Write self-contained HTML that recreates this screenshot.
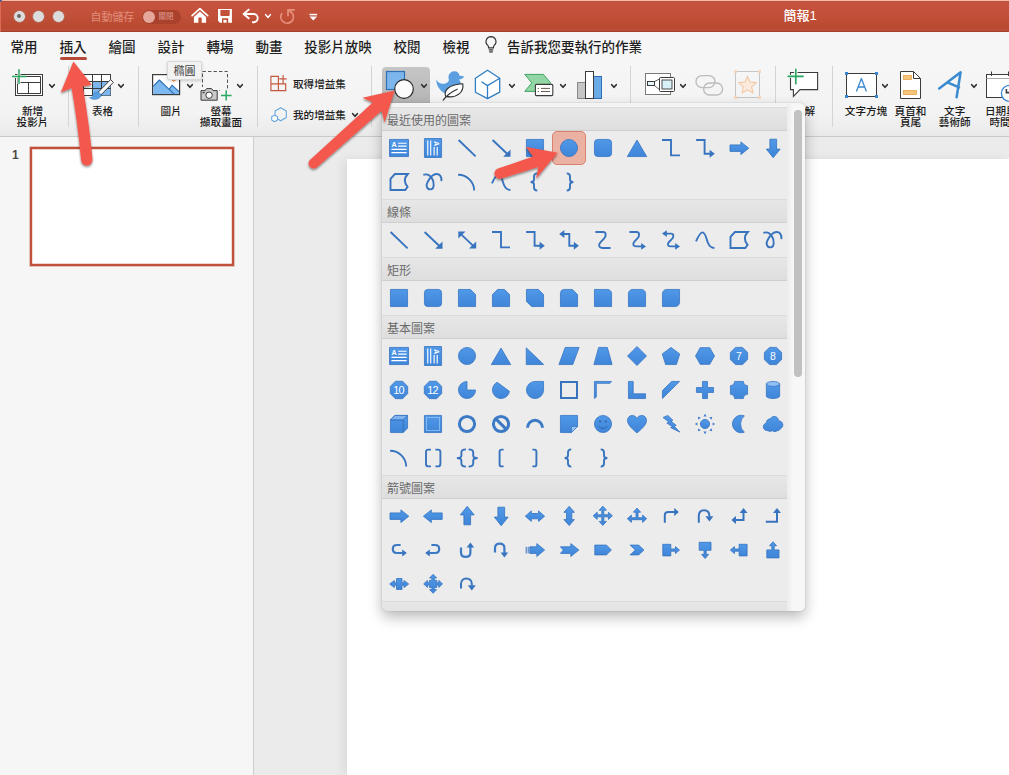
<!DOCTYPE html><html lang="zh-Hant"><head><meta charset="utf-8"><title>簡報1</title><style>
*{box-sizing:border-box;margin:0;padding:0}
html,body{width:1009px;height:775px;overflow:hidden;background:#fff}
body{font-family:"Liberation Sans","Noto Sans CJK TC",sans-serif;position:relative;color:#222;-webkit-font-smoothing:antialiased}
.abs{position:absolute}
#titlebar{left:0;top:0;width:1009px;height:32px;background:linear-gradient(#a8523f 0,#c5533e 4%,#c35139 40%,#b94931 86%,#bd4e37 91%,#bd4e37 95%,#963d2a 100%);border-top:1px solid #fdb9a8;border-left:1px solid #d96a55}
.tl{position:absolute;top:9.7px;width:13px;height:13px;border-radius:50%;background:#dcdcdc;border:1px solid #b9604e}
#tabs{left:0;top:32px;width:1009px;height:30px;background:#f6f6f6}
.tab{position:absolute;top:39.2px;font-size:13.5px;line-height:18px;color:#1e1e1e;white-space:nowrap;transform:translateX(-50%);font-weight:500}
#ribbon{left:0;top:62px;width:1009px;height:75px;background:linear-gradient(#f6f6f6,#f3f3f3 70%,#e9e9e9);border-bottom:1px solid #c9c9c9}
.sep{position:absolute;width:1px;background:#d4d4d4}
.lbl{position:absolute;font-size:10.6px;line-height:11.5px;color:#1a1a1a;text-align:center;white-space:nowrap;transform:translateX(-50%);font-weight:500}
.chev{position:absolute;width:9px;height:6px}
#panel{left:0;top:137px;width:254px;height:638px;background:#f6f6f6;border-right:1px solid #cfcfcf}
#work{left:254px;top:137px;width:755px;height:638px;background:#ebebeb}
#slide{left:347px;top:159px;width:662px;height:616px;background:#fff;box-shadow:-4px 0 10px rgba(0,0,0,.07)}
#thumb{left:30px;top:147px;width:204px;height:119px;background:#fff;border:2px solid #c0523b;box-shadow:0 0 0 0.6px rgba(192,82,59,.55),inset 0 0 0 0.4px rgba(192,82,59,.5)}
#dd{left:382px;top:103px;width:423px;height:508px;background:#ececec;border-radius:0 5px 5px 5px;box-shadow:0 6px 14px rgba(0,0,0,.28),0 0 1px rgba(0,0,0,.45);overflow:hidden}
.hd{position:absolute;left:0;width:409px;height:24px;background:linear-gradient(#e7e7e7,#dedede);border-top:1px solid #dcdcdc;border-bottom:1px solid #cfcfcf;font-size:12px;line-height:26px;color:#6a6a6a;padding-left:5px;white-space:nowrap}
#sbar{left:405px;top:0;width:18px;height:507px;background:linear-gradient(to right,#ececec,#f7f7f7 6px)}
#sthumb{left:412px;top:6px;width:8px;height:267px;border-radius:4px;background:#c1c1c1}
.ic{position:absolute;width:24px;height:24px;overflow:visible}
#sel{left:170px;top:27px;width:34px;height:34px;border-radius:5px;background:#ebb1a3;border:1px solid #d9806f}
</style></head><body>
<div id="titlebar" class="abs"></div>
<div class="tl" style="left:12.5px"></div>
<div class="tl" style="left:32.3px"></div>
<div class="tl" style="left:52.3px"></div>
<div class="abs" style="left:17.2px;top:14.2px;width:4px;height:4px;border-radius:50%;background:#6a6a6a"></div>
<div class="abs" style="left:90.5px;top:9.5px;font-size:11px;line-height:14px;color:#e08e7c;white-space:nowrap;letter-spacing:-0.1px">自動儲存</div>
<div class="abs" style="left:142px;top:10px;width:39px;height:13.5px;border-radius:7px;background:#a9412d"></div>
<div class="abs" style="left:142.5px;top:10.5px;width:12.5px;height:12.5px;border-radius:50%;background:#e5a799"></div>
<div class="abs" style="left:158.5px;top:11.6px;font-size:7.5px;line-height:10px;color:#e0a092;white-space:nowrap">關閉</div>
<svg class="abs" style="left:186px;top:2px;overflow:visible" width="120" height="28" viewBox="186 2 120 28" ><path d="M192.1,15.6 L199.9,8.6 L207.7,15.6" fill="none" stroke="#fff" stroke-width="1.7" stroke-linecap="round" stroke-linejoin="round"/><path d="M193.9,16.9 L199.9,11.5 L206.1,16.9 V22.7 H201.7 V17.5 H198.4 V22.7 H193.9 Z" fill="#fff"/><path d="M218,8.9 H231.9 V22.7 H219.9 L218,20.8 Z M220.4,10 V15 Q220.4,15.9 221.3,15.9 H228.8 Q229.7,15.9 229.7,15 V10 Z M222,18.3 V22.7 H228.2 V18.3 Z" fill="#fff" fill-rule="evenodd"/><rect x="223.4" y="19.9" width="3.2" height="2.8" fill="#fff"/><path d="M248.7,9.6 L243.6,14 L248.7,18.2 M244,14 H253.6 A4.1,4.1 0 0 1 253.6,22.2 H252.8" fill="none" stroke="#fff" stroke-width="1.9" stroke-linecap="round" stroke-linejoin="round"/><path d="M281.7,13.7 A6.3,6.3 0 1 0 292.6,13.8 Q291,11.4 288.6,10.6" fill="none" stroke="#e8907e" stroke-width="1.7" stroke-linecap="round"/><path d="M294.8,9.9 H288 V16.2" fill="none" stroke="#e8907e" stroke-width="1.7" stroke-linecap="butt" stroke-linejoin="miter"/></svg>
<svg class="abs" style="left:263px;top:11.3px;overflow:visible" width="10" height="10" viewBox="-5 -5 10 10"><path d="M-2.53,-1.4300000000000002 L0,1.4300000000000002 L2.53,-1.4300000000000002" fill="none" stroke="#fff" stroke-width="1.4" stroke-linecap="round" stroke-linejoin="round"/></svg>
<svg class="abs" style="left:309px;top:13px;overflow:visible" width="9" height="8" viewBox="0 0 9 8" ><rect x="0.5" y="0.8" width="7.6" height="1.5" fill="#fff"/><path d="M0.5,3.6 H8.1 L4.3,7.4 Z" fill="#fff"/></svg>
<div class="abs" style="left:800px;top:7px;transform:translateX(-50%);font-size:13px;line-height:18px;color:#fff;white-space:nowrap;font-weight:500">簡報1</div>
<svg class="abs" style="left:0;top:0" width="5" height="5" viewBox="0 0 5 5"><path d="M0,0 H3.6 A3.6,3.6 0 0 0 0,3.6 Z" fill="#2c4f9e"/></svg>
<div id="tabs" class="abs"></div>
<div class="tab" style="left:24px">常用</div>
<div class="tab" style="left:73px">插入</div>
<div class="tab" style="left:122px">繪圖</div>
<div class="tab" style="left:171px">設計</div>
<div class="tab" style="left:220px">轉場</div>
<div class="tab" style="left:269px">動畫</div>
<div class="tab" style="left:338px">投影片放映</div>
<div class="tab" style="left:407px">校閱</div>
<div class="tab" style="left:456px">檢視</div>
<div class="abs" style="left:60px;top:57px;width:27px;height:3px;border-radius:1.5px;background:#b64a38"></div>
<svg class="abs" style="left:484px;top:35px;overflow:visible" width="14" height="20" viewBox="0 0 14 20" ><path d="M7,1.6 A5,5 0 0 1 10.2,10.4 C9.6,11 9.4,11.8 9.4,12.8 H4.6 C4.6,11.8 4.4,11 3.8,10.4 A5,5 0 0 1 7,1.6 Z" fill="none" stroke="#333" stroke-width="1.2"/><path d="M4.8,14.8 H9.2 M5.2,16.8 H8.8" stroke="#333" stroke-width="1.2" fill="none"/></svg>
<div class="abs" style="left:507px;top:39.2px;font-size:13.5px;line-height:18px;color:#1e1e1e;white-space:nowrap;font-weight:500">告訴我您要執行的作業</div>
<div id="ribbon" class="abs"></div>
<div class="sep" style="left:68px;top:66px;height:61px"></div>
<div class="sep" style="left:138px;top:66px;height:61px"></div>
<div class="sep" style="left:257px;top:66px;height:61px"></div>
<div class="sep" style="left:371px;top:66px;height:61px"></div>
<div class="sep" style="left:630px;top:66px;height:38px"></div>
<div class="sep" style="left:775px;top:66px;height:38px"></div>
<div class="sep" style="left:832px;top:66px;height:61px"></div>
<svg class="abs" style="left:12px;top:69px;overflow:visible" width="32" height="28" viewBox="0 0 32 28" ><rect x="3.5" y="5.5" width="27" height="21" fill="#fff" stroke="#3b3b3b" stroke-width="1"/><path d="M5.5,7.5 H28.5 V24.5 H5.5 Z M5.5,13.5 H28.5 M16.5,13.5 V24.5" fill="#fff" stroke="#3b3b3b" stroke-width="1"/><rect x="0" y="0" width="13" height="15" fill="#f5f5f5" opacity="0.0"/><path d="M7,0.5 V15 M0.5,7.5 H14" stroke="#f4f4f4" stroke-width="3.2" fill="none"/><path d="M7,0.8 V14.6 M0.6,7.5 H13.6" stroke="#2aa862" stroke-width="1.5" fill="none" stroke-linecap="round"/></svg>
<svg class="abs" style="left:47px;top:80.5px;overflow:visible" width="10" height="10" viewBox="-5 -5 10 10"><path d="M-2.3,-1.3 L0,1.3 L2.3,-1.3" fill="none" stroke="#2b2b2b" stroke-width="1.6" stroke-linecap="round" stroke-linejoin="round"/></svg>
<div class="lbl" style="left:32.5px;top:105.5px">新增<br>投影片</div>
<svg class="abs" style="left:83px;top:74px;overflow:visible" width="30" height="24" viewBox="0 0 30 24" ><rect x="0.5" y="0.5" width="27" height="21" fill="#fff" stroke="#3b3b3b"/><rect x="9.5" y="7.5" width="18" height="14" fill="#7db6ec"/><path d="M0.5,7.5 H27.5 M0.5,14.5 H27.5 M9.5,0.5 V21.5 M18.5,0.5 V21.5" stroke="#3b3b3b" fill="none"/><path d="M27.6,5.6 L30.4,8.4 L17.2,21.6 L14.4,19 Z" fill="#fff" stroke="#3b3b3b" stroke-width="1" stroke-linejoin="round"/><path d="M15,18.2 C12.2,17.4 10.4,19.2 10,21.2 C9.6,22.8 8.4,23.8 6.4,23.6 C9.2,26.2 15,25.8 17.4,23 C18.8,21.4 17.8,19 15,18.2 Z" fill="#5a9fe0" stroke="#3a7fcc" stroke-width="0.6"/></svg>
<svg class="abs" style="left:116px;top:80.5px;overflow:visible" width="10" height="10" viewBox="-5 -5 10 10"><path d="M-2.3,-1.3 L0,1.3 L2.3,-1.3" fill="none" stroke="#2b2b2b" stroke-width="1.6" stroke-linecap="round" stroke-linejoin="round"/></svg>
<div class="lbl" style="left:102.5px;top:105.5px">表格</div>
<svg class="abs" style="left:152px;top:74px;overflow:visible" width="29" height="21" viewBox="0 0 29 21" ><rect x="0.6" y="0.6" width="27" height="20" fill="#fff" stroke="#3b3b3b" stroke-width="1.2"/><path d="M1.2,20 V12.4 L7.3,6 L17,15.8 L20,11.2 L27,17.6 V20 Z" fill="#7db8ee"/><path d="M1.2,12.4 L7.3,6 L22.4,20.4 M17,15.6 L20,11.2 L27,17.6" fill="none" stroke="#2a6db8" stroke-width="1.1" stroke-linejoin="round"/><circle cx="21.8" cy="5.6" r="2.1" fill="#f0a05a"/></svg>
<svg class="abs" style="left:185px;top:80.5px;overflow:visible" width="10" height="10" viewBox="-5 -5 10 10"><path d="M-2.3,-1.3 L0,1.3 L2.3,-1.3" fill="none" stroke="#2b2b2b" stroke-width="1.6" stroke-linecap="round" stroke-linejoin="round"/></svg>
<div class="lbl" style="left:171px;top:105.5px">圖片</div>
<svg class="abs" style="left:200px;top:70px;overflow:visible" width="34" height="32" viewBox="0 0 34 32" ><rect x="2.5" y="1.5" width="25" height="19" fill="none" stroke="#555" stroke-width="1" stroke-dasharray="3.4,2.1"/><rect x="-0.5" y="17" width="19.5" height="15" fill="#f5f5f5"/><path d="M1,20.6 H5.2 L6.6,18.6 H11.6 L13,20.6 H17.2 V30.2 H1 Z" fill="#c9c9c9" stroke="#3b3b3b" stroke-width="1" stroke-linejoin="round"/><circle cx="9.1" cy="25.2" r="3.2" fill="#fff" stroke="#3b3b3b" stroke-width="1"/><rect x="2.6" y="22" width="2" height="1.2" fill="#3b3b3b"/><rect x="19.5" y="19.5" width="14" height="13" fill="#f5f5f5"/><path d="M26.2,20.2 V30.6 M21,25.4 H31.6" stroke="#2aa862" stroke-width="1.5" fill="none"/></svg>
<svg class="abs" style="left:235px;top:80.5px;overflow:visible" width="10" height="10" viewBox="-5 -5 10 10"><path d="M-2.3,-1.3 L0,1.3 L2.3,-1.3" fill="none" stroke="#2b2b2b" stroke-width="1.6" stroke-linecap="round" stroke-linejoin="round"/></svg>
<div class="lbl" style="left:221px;top:105.5px">螢幕<br>擷取畫面</div>
<svg class="abs" style="left:268px;top:72px;overflow:visible" width="22" height="22" viewBox="268 72 22 22" ><path d="M270.9,76.4 H278.4 V90.6 H270.9 Z M270.9,83.9 H285.7 V90.6 H278.4" fill="none" stroke="#c4573e" stroke-width="1.15"/><path d="M283.1,74.9 V83.9 M279.3,78.8 H286.7" stroke="#c4573e" stroke-width="1.15" fill="none"/></svg>
<div class="abs" style="left:293px;top:76.8px;font-size:10.6px;line-height:14px;color:#1e1e1e;white-space:nowrap;font-weight:500">取得增益集</div>
<svg class="abs" style="left:268px;top:104px;overflow:visible" width="22" height="22" viewBox="268 104 22 22" ><path d="M280.7,107.7 L286.3,110.95 V117.45 L280.7,120.7 L275.1,117.45 V110.95 Z" fill="none" stroke="#62a5de" stroke-width="1.05" stroke-linejoin="round"/><path d="M274.6,115.1 L277.5,116.75 V120.05 L274.6,121.7 L271.7,120.05 V116.75 Z" fill="#fff" stroke="#62a5de" stroke-width="1.05" stroke-linejoin="round"/></svg>
<div class="abs" style="left:293px;top:108px;font-size:10.6px;line-height:14px;color:#1e1e1e;white-space:nowrap;font-weight:500">我的增益集</div>
<svg class="abs" style="left:350px;top:110.2px;overflow:visible" width="10" height="10" viewBox="-5 -5 10 10"><path d="M-2.3,-1.3 L0,1.3 L2.3,-1.3" fill="none" stroke="#2b2b2b" stroke-width="1.6" stroke-linecap="round" stroke-linejoin="round"/></svg>
<div class="abs" style="left:382px;top:67px;width:48px;height:36px;border-radius:4px 4px 0 0;background:linear-gradient(#c6c6c6,#b5b5b5)"></div>
<svg class="abs" style="left:385px;top:70px;overflow:visible" width="30" height="30" viewBox="0 0 30 30" ><rect x="1.5" y="1.5" width="18" height="18" fill="#7db6ec" stroke="#2f6fb5" stroke-width="1.2"/><circle cx="19" cy="19" r="9.3" fill="#fbfbfb" stroke="#2b2b2b" stroke-width="1.2"/></svg>
<svg class="abs" style="left:419px;top:80.5px;overflow:visible" width="10" height="10" viewBox="-5 -5 10 10"><path d="M-2.3,-1.3 L0,1.3 L2.3,-1.3" fill="none" stroke="#2b2b2b" stroke-width="1.6" stroke-linecap="round" stroke-linejoin="round"/></svg>
<svg class="abs" style="left:434px;top:68px;overflow:visible" width="34" height="34" viewBox="434 68 34 34" ><path d="M436.2,79.2 C437.4,82.8 441.6,84.8 446,83.2 C447.4,82.6 448.6,81.4 449,80 C447.4,76 449.6,71.6 454,71.2 C457,71 459.2,73 459.4,75.4 L464.2,76.6 C463.2,78.6 461,79.6 458.8,79.4 C461.4,82 462.4,86 461,89.4 C459,93.6 453,95 447.6,94 C441.4,92.8 436.4,87 436.2,79.2 Z" fill="#5b9fe0"/><path d="M445.8,96.4 C443.4,91.2 447.6,84.6 462.8,83.8 C464,91.6 457.4,98.8 445.8,96.4 Z" fill="#fff" stroke="#333" stroke-width="1.15" stroke-linejoin="round"/><path d="M443.2,100.2 C446.6,95.4 451,92 457.2,89.2" fill="none" stroke="#333" stroke-width="1.15" stroke-linecap="round"/></svg>
<svg class="abs" style="left:472px;top:68px;overflow:visible" width="32" height="34" viewBox="472 68 32 34" ><path d="M487.5,70.2 L499.7,78.2 V92.2 L487.5,98.6 L475.4,92.2 V78.2 Z" fill="#fff" stroke="#2f7fc4" stroke-width="1.3" stroke-linejoin="round"/><path d="M499.7,78.2 L487.5,85.6 V98.6 M487.5,85.6 L481.4,81.8" fill="none" stroke="#2f7fc4" stroke-width="1.3" stroke-linejoin="round"/></svg>
<svg class="abs" style="left:506.5px;top:80.5px;overflow:visible" width="10" height="10" viewBox="-5 -5 10 10"><path d="M-2.3,-1.3 L0,1.3 L2.3,-1.3" fill="none" stroke="#2b2b2b" stroke-width="1.6" stroke-linecap="round" stroke-linejoin="round"/></svg>
<svg class="abs" style="left:522px;top:72px;overflow:visible" width="34" height="26" viewBox="522 72 34 26" ><path d="M524.8,74.4 H543.4 L550.6,82.8 L543.4,91.4 H524.8 L531.8,82.8 Z" fill="#93d6a6" stroke="#3fa463" stroke-width="1" stroke-linejoin="round"/><rect x="535.4" y="84.4" width="17.4" height="11.2" rx="1" fill="#fff" stroke="#3b3b3b" stroke-width="1.1"/><path d="M537.8,88.4 H539 M541,88.4 H550 M537.8,91.5 H539 M541,91.5 H550" stroke="#6a5a50" stroke-width="1" fill="none"/></svg>
<svg class="abs" style="left:558px;top:80.5px;overflow:visible" width="10" height="10" viewBox="-5 -5 10 10"><path d="M-2.3,-1.3 L0,1.3 L2.3,-1.3" fill="none" stroke="#2b2b2b" stroke-width="1.6" stroke-linecap="round" stroke-linejoin="round"/></svg>
<svg class="abs" style="left:576px;top:70px;overflow:visible" width="28" height="30" viewBox="0 0 28 30" ><rect x="1.5" y="12.5" width="8" height="16" fill="#c6c6c6" stroke="#8a8a8a" stroke-width="1"/><rect x="17.5" y="6.5" width="8" height="22" fill="#6aaae6" stroke="#2f6fb5" stroke-width="1"/><rect x="9.5" y="1.5" width="8" height="27" fill="#fff" stroke="#3b3b3b" stroke-width="1"/></svg>
<svg class="abs" style="left:609px;top:80.5px;overflow:visible" width="10" height="10" viewBox="-5 -5 10 10"><path d="M-2.3,-1.3 L0,1.3 L2.3,-1.3" fill="none" stroke="#2b2b2b" stroke-width="1.6" stroke-linecap="round" stroke-linejoin="round"/></svg>
<svg class="abs" style="left:645px;top:73px;overflow:visible" width="31" height="23" viewBox="0 0 31 23" ><rect x="0.5" y="0.5" width="25" height="21" fill="#fff" stroke="#7a7a7a" stroke-width="1"/><rect x="2.5" y="8.5" width="7" height="4" fill="#e6f6fb" stroke="#3b3b3b" stroke-width="1"/><path d="M9.5,8.5 L15.5,5.5 M9.5,12.5 L15.5,17.5" stroke="#3b3b3b" stroke-width="0.8" fill="none"/><rect x="14.5" y="4.5" width="15" height="14" rx="1" fill="#fff" stroke="#3b3b3b" stroke-width="1"/><rect x="17" y="7" width="10" height="9" fill="#d8f1f8" stroke="#3b3b3b" stroke-width="0.9"/></svg>
<svg class="abs" style="left:678px;top:80.5px;overflow:visible" width="10" height="10" viewBox="-5 -5 10 10"><path d="M-2.3,-1.3 L0,1.3 L2.3,-1.3" fill="none" stroke="#2b2b2b" stroke-width="1.6" stroke-linecap="round" stroke-linejoin="round"/></svg>
<svg class="abs" style="left:695px;top:74px;overflow:visible" width="30" height="23" viewBox="0 0 30 23" ><rect x="1" y="1.6" width="19" height="12" rx="6" fill="none" stroke="#bdbdbd" stroke-width="1.4"/><rect x="8.6" y="9" width="19" height="12" rx="6" fill="none" stroke="#bdbdbd" stroke-width="1.4"/></svg>
<svg class="abs" style="left:734px;top:70px;overflow:visible" width="28" height="30" viewBox="0 0 28 30" ><rect x="1.5" y="1.5" width="24" height="26" fill="none" stroke="#c6c6c6" stroke-width="1"/><rect x="0" y="0" width="3" height="3" fill="#f6d8c0"/><rect x="0" y="26" width="3" height="3" fill="#f6d8c0"/><rect x="24" y="0" width="3" height="3" fill="#f6d8c0"/><rect x="24" y="26" width="3" height="3" fill="#f6d8c0"/><path d="M13.5,6.2 L16,12 L22.4,12.6 L17.6,16.8 L19,23 L13.5,19.8 L8,23 L9.4,16.8 L4.6,12.6 L11,12 Z" fill="#fcebdc" stroke="#f3c9a6" stroke-width="1.1" stroke-linejoin="round"/></svg>
<svg class="abs" style="left:786px;top:66px;overflow:visible" width="36" height="34" viewBox="786 66 36 34" ><path d="M790.5,72.5 H817.6 V89.6 H800 L793.4,96.4 V89.6 H790.5 Z" fill="#fff" stroke="#3b3b3b" stroke-width="1.1" stroke-linejoin="miter"/><path d="M795.8,68.6 V84.4 M787.6,76.4 H803.6" stroke="#f5f5f5" stroke-width="3.4" fill="none"/><path d="M795.8,69.2 V83.8 M788.2,76.4 H803" stroke="#2aa862" stroke-width="1.6" fill="none" stroke-linecap="round"/></svg>
<div class="lbl" style="left:804.5px;top:105.5px">註解</div>
<svg class="abs" style="left:845px;top:72px;overflow:visible" width="33" height="26" viewBox="0 0 33 26" ><rect x="1.5" y="1.5" width="30" height="23" fill="#fff" stroke="#3b3b3b" stroke-width="1"/><rect x="0" y="0" width="3" height="3" fill="#3a86d2"/><rect x="30" y="0" width="3" height="3" fill="#3a86d2"/><rect x="0" y="23" width="3" height="3" fill="#3a86d2"/><rect x="30" y="23" width="3" height="3" fill="#3a86d2"/><path d="M11.4,19.4 L16.4,6.6 L21.4,19.4 M13.2,15 H19.6" fill="none" stroke="#3a86d2" stroke-width="1.3" stroke-linejoin="round"/></svg>
<svg class="abs" style="left:879.6px;top:80.5px;overflow:visible" width="10" height="10" viewBox="-5 -5 10 10"><path d="M-2.3,-1.3 L0,1.3 L2.3,-1.3" fill="none" stroke="#2b2b2b" stroke-width="1.6" stroke-linecap="round" stroke-linejoin="round"/></svg>
<div class="lbl" style="left:866px;top:105.5px">文字方塊</div>
<svg class="abs" style="left:899px;top:70px;overflow:visible" width="23" height="30" viewBox="0 0 23 30" ><path d="M1.5,1.5 H14.5 L21.5,8.5 V28.5 H1.5 Z" fill="#fff" stroke="#3b3b3b" stroke-width="1" stroke-linejoin="round"/><path d="M14.5,1.5 V8.5 H21.5" fill="none" stroke="#3b3b3b" stroke-width="1"/><rect x="4.5" y="5.5" width="8" height="4" fill="#f7c47c" stroke="#e5a64f" stroke-width="0.8"/><rect x="4.5" y="20.5" width="13" height="4" fill="#f7c47c" stroke="#e5a64f" stroke-width="0.8"/></svg>
<div class="lbl" style="left:910.5px;top:105.5px">頁首和<br>頁尾</div>
<svg class="abs" style="left:937px;top:70px;overflow:visible" width="28" height="30" viewBox="0 0 28 30" ><path d="M2.2,18.4 L23.6,2.2 L19.6,27.2 M11,12.6 L22,17.4" fill="none" stroke="#3a8ad0" stroke-width="2.5" stroke-linecap="round" stroke-linejoin="round"/></svg>
<svg class="abs" style="left:968.6px;top:80.5px;overflow:visible" width="10" height="10" viewBox="-5 -5 10 10"><path d="M-2.3,-1.3 L0,1.3 L2.3,-1.3" fill="none" stroke="#2b2b2b" stroke-width="1.6" stroke-linecap="round" stroke-linejoin="round"/></svg>
<div class="lbl" style="left:954.7px;top:105.5px">文字<br>藝術師</div>
<svg class="abs" style="left:985px;top:70px;overflow:visible" width="28" height="30" viewBox="0 0 28 30" ><rect x="1.5" y="4.5" width="30" height="23" fill="#fff" stroke="#3b3b3b" stroke-width="1"/><path d="M1.5,8.5 H31" stroke="#a8a8a8" stroke-width="1" fill="none"/><path d="M6.5,1.5 V6 M23.5,1.5 V6" stroke="#3b3b3b" stroke-width="1" fill="none"/><circle cx="24.4" cy="23.4" r="8" fill="#fff" stroke="#3a86d2" stroke-width="1.3"/><path d="M21.4,19 V22.6 H24.4" fill="none" stroke="#3b3b3b" stroke-width="1.6"/></svg>
<div class="abs" style="left:985px;top:105.5px;font-size:10.6px;line-height:11.5px;color:#1e1e1e;white-space:nowrap;font-weight:500">日期與</div>
<div class="abs" style="left:989.5px;top:117px;font-size:10.6px;line-height:11.5px;color:#1e1e1e;white-space:nowrap;font-weight:500">時間</div>
<div class="abs" style="left:167px;top:60.5px;width:35px;height:19px;background:#f2f2f2;border:1px solid #d9d9d9;border-radius:2px;box-shadow:0 1px 3px rgba(0,0,0,.18);font-size:11px;line-height:19px;text-align:center;color:#454545">橢圓</div>
<div id="panel" class="abs"></div><div id="work" class="abs"></div><div id="slide" class="abs"></div>
<div class="abs" style="left:12px;top:149px;font-size:12px;font-weight:bold;color:#4a4a4a;line-height:13px">1</div>
<div id="thumb" class="abs"></div>
<svg width="0" height="0" style="position:absolute"><defs><linearGradient id="bg" x1="0" y1="0" x2="0" y2="1"><stop offset="0" stop-color="#5098e8"/><stop offset="1" stop-color="#3f85d8"/></linearGradient></defs></svg>
<div id="dd" class="abs">
<div class="abs" style="left:0;top:0;width:423px;height:5px;background:#f4f4f4"></div><div class="abs" style="left:0;top:1px;width:423px;height:507px">
<div class="hd" style="top:3px">最近使用的圖案</div>
<div class="hd" style="top:95px">線條</div>
<div class="hd" style="top:153px">矩形</div>
<div class="hd" style="top:211px">基本圖案</div>
<div class="hd" style="top:371px">箭號圖案</div>
<div class="hd" style="top:497px"></div>
<div id="sel" class="abs"></div>
<svg class="ic" style="left:5px;top:32px" viewBox="0 0 24 24"><g transform="translate(12 12) scale(.95) translate(-12 -12)"><rect x="2" y="3" width="20" height="18" fill="url(#bg)" stroke="#3472bf" stroke-width="0.8" stroke-linejoin="round"/><text x="4" y="11.2" font-size="7.5" font-family="Liberation Sans,sans-serif" font-weight="bold" fill="#fff">A</text><path d="M11,7 H20 M11,10 H20 M4,13.5 H20 M4,16.8 H20" stroke="#fff" stroke-width="1.2" fill="none"/></g></svg>
<svg class="ic" style="left:39px;top:32px" viewBox="0 0 24 24"><g transform="translate(12 12) scale(.95) translate(-12 -12)"><rect x="3" y="2" width="18" height="20" fill="url(#bg)" stroke="#3472bf" stroke-width="0.8" stroke-linejoin="round"/><text x="0" y="0" font-size="7.5" font-family="Liberation Sans,sans-serif" font-weight="bold" fill="#fff" transform="translate(13,4.5) rotate(90)">A</text><path d="M6.5,4 V20 M9.6,4 V20 M13.2,11 V20 M16.4,11 V20" stroke="#fff" stroke-width="1.2" fill="none"/></g></svg>
<svg class="ic" style="left:73px;top:32px" viewBox="0 0 24 24"><path d="M3.6,4 L20.6,20.4" fill="none" stroke="#3874be" stroke-width="1.9"/></svg>
<svg class="ic" style="left:107px;top:32px" viewBox="0 0 24 24"><path d="M3.6,4 L18.4,18" fill="none" stroke="#3874be" stroke-width="1.9"/><path d="M21.5,20.8 V13.6 L14.2,20.8 Z" fill="#3874be" stroke="none"/></svg>
<svg class="ic" style="left:141px;top:32px" viewBox="0 0 24 24"><g transform="translate(12 12) scale(.95) translate(-12 -12)"><rect x="3" y="3" width="18" height="18" fill="url(#bg)" stroke="#3472bf" stroke-width="0.8" stroke-linejoin="round"/></g></svg>
<svg class="ic" style="left:175px;top:32px" viewBox="0 0 24 24"><g transform="translate(12 12) scale(.95) translate(-12 -12)"><circle cx="12" cy="12" r="9" fill="url(#bg)" stroke="#3472bf" stroke-width="0.8" stroke-linejoin="round"/></g></svg>
<svg class="ic" style="left:209px;top:32px" viewBox="0 0 24 24"><g transform="translate(12 12) scale(.95) translate(-12 -12)"><rect x="3" y="3" width="18" height="18" rx="3.5" fill="url(#bg)" stroke="#3472bf" stroke-width="0.8" stroke-linejoin="round"/></g></svg>
<svg class="ic" style="left:243px;top:32px" viewBox="0 0 24 24"><g transform="translate(12 12) scale(.95) translate(-12 -12)"><path d="M12,3.6 L22.2,21 H1.8 Z" fill="url(#bg)" stroke="#3472bf" stroke-width="0.8" stroke-linejoin="round"/></g></svg>
<svg class="ic" style="left:277px;top:32px" viewBox="0 0 24 24"><path d="M3,4 H12 V19.4 H21" fill="none" stroke="#3874be" stroke-width="1.9"/></svg>
<svg class="ic" style="left:311px;top:32px" viewBox="0 0 24 24"><path d="M3.1,4 H11.6 V17.8 H17.4" fill="none" stroke="#3874be" stroke-width="1.9"/><path d="M21.8,17.8 L16.6,13.8 V21.8 Z" fill="#3874be" stroke="none"/></svg>
<svg class="ic" style="left:345px;top:32px" viewBox="0 0 24 24"><path d="M3,8.9 H13.9 V5.9 L21.8,12.2 L13.9,18.6 V15.4 H3 Z" fill="url(#bg)" stroke="#3472bf" stroke-width="0.8" stroke-linejoin="round"/></svg>
<svg class="ic" style="left:379px;top:32px" viewBox="0 0 24 24"><path d="M8.9,3.2 V13.1 H5.3 L12.2,21.7 L19.2,13.1 H15.6 V3.2 Z" fill="url(#bg)" stroke="#3472bf" stroke-width="0.8" stroke-linejoin="round"/></svg>
<svg class="ic" style="left:5px;top:66px" viewBox="0 0 24 24"><path d="M3.5,20 V8.9 L7.9,4 H20.8 C17.6,7.4 16.4,12 20.6,16.8 L18.3,20 Z" fill="none" stroke="#3874be" stroke-width="1.9"/></svg>
<svg class="ic" style="left:39px;top:66px" viewBox="0 0 24 24"><path d="M3.1,4.7 C6,3.8 9,5.4 11,8.4 C13.6,12.4 13.4,19.4 9.4,19.4 C6,19.4 4.6,15.6 6.6,12 C8.6,8.2 12,4 15.6,4 C19,4 20.6,6.8 20.4,10.4" fill="none" stroke="#3874be" stroke-width="1.9" stroke-linecap="round"/></svg>
<svg class="ic" style="left:73px;top:66px" viewBox="0 0 24 24"><path d="M3.1,4.7 A16,16 0 0 1 19.2,20.6" fill="none" stroke="#3874be" stroke-width="1.9"/></svg>
<svg class="ic" style="left:107px;top:66px" viewBox="0 0 24 24"><path d="M3,13.4 C5.4,8 7.4,4.4 9.6,4.4 C12.4,4.4 13.4,11 15,15 C16.4,18.4 18,19.8 21.4,20" fill="none" stroke="#3874be" stroke-width="1.9"/></svg>
<svg class="ic" style="left:141px;top:66px" viewBox="0 0 24 24"><path d="M14.3,3.4 C11.8,3.4 11,4.4 11,6.4 V9.4 C11,11 10,12 7.6,12 C10,12 11,13 11,14.6 V17.6 C11,19.6 11.8,20.6 14.3,20.6" fill="none" stroke="#3874be" stroke-width="1.9"/></svg>
<svg class="ic" style="left:175px;top:66px" viewBox="0 0 24 24"><path d="M9.7,3.4 C12.2,3.4 13,4.4 13,6.4 V9.4 C13,11 14,12 16.4,12 C14,12 13,13 13,14.6 V17.6 C13,19.6 12.2,20.6 9.7,20.6" fill="none" stroke="#3874be" stroke-width="1.9"/></svg>
<svg class="ic" style="left:5px;top:124px" viewBox="0 0 24 24"><path d="M3.6,4 L20.6,20.4" fill="none" stroke="#3874be" stroke-width="1.9"/></svg>
<svg class="ic" style="left:39px;top:124px" viewBox="0 0 24 24"><path d="M3.6,4 L18.4,18" fill="none" stroke="#3874be" stroke-width="1.9"/><path d="M21.5,20.8 V13.6 L14.2,20.8 Z" fill="#3874be" stroke="none"/></svg>
<svg class="ic" style="left:73px;top:124px" viewBox="0 0 24 24"><path d="M6.4,6.6 L18,17.6" fill="none" stroke="#3874be" stroke-width="1.9"/><path d="M21.2,20.5 V13.4 L14,20.5 Z" fill="#3874be" stroke="none"/><path d="M3.3,3.5 V10.6 L10.5,3.5 Z" fill="#3874be" stroke="none"/></svg>
<svg class="ic" style="left:107px;top:124px" viewBox="0 0 24 24"><path d="M3,4 H12 V19.4 H21" fill="none" stroke="#3874be" stroke-width="1.9"/></svg>
<svg class="ic" style="left:141px;top:124px" viewBox="0 0 24 24"><path d="M3.1,4 H11.6 V17.8 H17.4" fill="none" stroke="#3874be" stroke-width="1.9"/><path d="M21.8,17.8 L16.6,13.8 V21.8 Z" fill="#3874be" stroke="none"/></svg>
<svg class="ic" style="left:175px;top:124px" viewBox="0 0 24 24"><path d="M7,6 H12.3 V17.8 H17.4" fill="none" stroke="#3874be" stroke-width="1.9"/><path d="M21.9,17.8 L16.8,13.8 V21.8 Z" fill="#3874be" stroke="none"/><path d="M2.2,6 L7.4,2 V10 Z" fill="#3874be" stroke="none"/></svg>
<svg class="ic" style="left:209px;top:124px" viewBox="0 0 24 24"><path d="M4.4,4 H12 C15.4,4 15.4,8 13,10.6 L9.4,14.4 C7,17 8,20 11.4,20 H19.6" fill="none" stroke="#3874be" stroke-width="1.9"/></svg>
<svg class="ic" style="left:243px;top:124px" viewBox="0 0 24 24"><path d="M4.4,4 H11.4 C14.8,4 14.8,8 12.4,10.4 L9.4,13.6 C7.4,16 8,18.4 11.4,18.4 H17" fill="none" stroke="#3874be" stroke-width="1.9"/><path d="M21,18.4 L16.2,15 V21.8 Z" fill="#3874be" stroke="none"/></svg>
<svg class="ic" style="left:277px;top:124px" viewBox="0 0 24 24"><path d="M7,5.6 H12 C15,5.6 15,9 12.8,11.2 L10,14 C8,16.2 8.6,18.4 11.6,18.4 H17" fill="none" stroke="#3874be" stroke-width="1.9"/><path d="M21,18.4 L16.2,15 V21.8 Z" fill="#3874be" stroke="none"/><path d="M3,5.6 L7.8,2.2 V9 Z" fill="#3874be" stroke="none"/></svg>
<svg class="ic" style="left:311px;top:124px" viewBox="0 0 24 24"><path d="M3,13.4 C5.4,8 7.4,4.4 9.6,4.4 C12.4,4.4 13.4,11 15,15 C16.4,18.4 18,19.8 21.4,20" fill="none" stroke="#3874be" stroke-width="1.9"/></svg>
<svg class="ic" style="left:345px;top:124px" viewBox="0 0 24 24"><path d="M3.5,20 V8.9 L7.9,4 H20.8 C17.6,7.4 16.4,12 20.6,16.8 L18.3,20 Z" fill="none" stroke="#3874be" stroke-width="1.9"/></svg>
<svg class="ic" style="left:379px;top:124px" viewBox="0 0 24 24"><path d="M3.1,4.7 C6,3.8 9,5.4 11,8.4 C13.6,12.4 13.4,19.4 9.4,19.4 C6,19.4 4.6,15.6 6.6,12 C8.6,8.2 12,4 15.6,4 C19,4 20.6,6.8 20.4,10.4" fill="none" stroke="#3874be" stroke-width="1.9" stroke-linecap="round"/></svg>
<svg class="ic" style="left:5px;top:182px" viewBox="0 0 24 24"><g transform="translate(12 12) scale(.95) translate(-12 -12)"><rect x="3" y="3" width="18" height="18" fill="url(#bg)" stroke="#3472bf" stroke-width="0.8" stroke-linejoin="round"/></g></svg>
<svg class="ic" style="left:39px;top:182px" viewBox="0 0 24 24"><g transform="translate(12 12) scale(.95) translate(-12 -12)"><rect x="3" y="3" width="18" height="18" rx="3.5" fill="url(#bg)" stroke="#3472bf" stroke-width="0.8" stroke-linejoin="round"/></g></svg>
<svg class="ic" style="left:73px;top:182px" viewBox="0 0 24 24"><g transform="translate(12 12) scale(.95) translate(-12 -12)"><path d="M3,3 H15.6 L21,8.4 V21 H3 Z" fill="url(#bg)" stroke="#3472bf" stroke-width="0.8" stroke-linejoin="round"/></g></svg>
<svg class="ic" style="left:107px;top:182px" viewBox="0 0 24 24"><g transform="translate(12 12) scale(.95) translate(-12 -12)"><path d="M8.4,3 H15.6 L21,8.4 V21 H3 V8.4 Z" fill="url(#bg)" stroke="#3472bf" stroke-width="0.8" stroke-linejoin="round"/></g></svg>
<svg class="ic" style="left:141px;top:182px" viewBox="0 0 24 24"><g transform="translate(12 12) scale(.95) translate(-12 -12)"><path d="M3,3 H15.6 L21,8.4 V21 H8.4 L3,15.6 Z" fill="url(#bg)" stroke="#3472bf" stroke-width="0.8" stroke-linejoin="round"/></g></svg>
<svg class="ic" style="left:175px;top:182px" viewBox="0 0 24 24"><g transform="translate(12 12) scale(.95) translate(-12 -12)"><path d="M7,3 H15.6 L21,8.4 V21 H3 V7 A4,4 0 0 1 7,3 Z" fill="url(#bg)" stroke="#3472bf" stroke-width="0.8" stroke-linejoin="round"/></g></svg>
<svg class="ic" style="left:209px;top:182px" viewBox="0 0 24 24"><g transform="translate(12 12) scale(.95) translate(-12 -12)"><path d="M3,3 H16.6 A4.4,4.4 0 0 1 21,7.4 V21 H3 Z" fill="url(#bg)" stroke="#3472bf" stroke-width="0.8" stroke-linejoin="round"/></g></svg>
<svg class="ic" style="left:243px;top:182px" viewBox="0 0 24 24"><g transform="translate(12 12) scale(.95) translate(-12 -12)"><path d="M7.4,3 H16.6 A4.4,4.4 0 0 1 21,7.4 V21 H3 V7.4 A4.4,4.4 0 0 1 7.4,3 Z" fill="url(#bg)" stroke="#3472bf" stroke-width="0.8" stroke-linejoin="round"/></g></svg>
<svg class="ic" style="left:277px;top:182px" viewBox="0 0 24 24"><g transform="translate(12 12) scale(.95) translate(-12 -12)"><path d="M7.4,3 H21 V16.6 A4.4,4.4 0 0 1 16.6,21 H3 V7.4 A4.4,4.4 0 0 1 7.4,3 Z" fill="url(#bg)" stroke="#3472bf" stroke-width="0.8" stroke-linejoin="round"/></g></svg>
<svg class="ic" style="left:5px;top:240px" viewBox="0 0 24 24"><g transform="translate(12 12) scale(.95) translate(-12 -12)"><rect x="2" y="3" width="20" height="18" fill="url(#bg)" stroke="#3472bf" stroke-width="0.8" stroke-linejoin="round"/><text x="4" y="11.2" font-size="7.5" font-family="Liberation Sans,sans-serif" font-weight="bold" fill="#fff">A</text><path d="M11,7 H20 M11,10 H20 M4,13.5 H20 M4,16.8 H20" stroke="#fff" stroke-width="1.2" fill="none"/></g></svg>
<svg class="ic" style="left:39px;top:240px" viewBox="0 0 24 24"><g transform="translate(12 12) scale(.95) translate(-12 -12)"><rect x="3" y="2" width="18" height="20" fill="url(#bg)" stroke="#3472bf" stroke-width="0.8" stroke-linejoin="round"/><text x="0" y="0" font-size="7.5" font-family="Liberation Sans,sans-serif" font-weight="bold" fill="#fff" transform="translate(13,4.5) rotate(90)">A</text><path d="M6.5,4 V20 M9.6,4 V20 M13.2,11 V20 M16.4,11 V20" stroke="#fff" stroke-width="1.2" fill="none"/></g></svg>
<svg class="ic" style="left:73px;top:240px" viewBox="0 0 24 24"><g transform="translate(12 12) scale(.95) translate(-12 -12)"><circle cx="12" cy="12" r="9" fill="url(#bg)" stroke="#3472bf" stroke-width="0.8" stroke-linejoin="round"/></g></svg>
<svg class="ic" style="left:107px;top:240px" viewBox="0 0 24 24"><g transform="translate(12 12) scale(.95) translate(-12 -12)"><path d="M12,3.6 L22.2,21 H1.8 Z" fill="url(#bg)" stroke="#3472bf" stroke-width="0.8" stroke-linejoin="round"/></g></svg>
<svg class="ic" style="left:141px;top:240px" viewBox="0 0 24 24"><g transform="translate(12 12) scale(.95) translate(-12 -12)"><path d="M2.8,3.4 V21 H21.2 Z" fill="url(#bg)" stroke="#3472bf" stroke-width="0.8" stroke-linejoin="round"/></g></svg>
<svg class="ic" style="left:175px;top:240px" viewBox="0 0 24 24"><g transform="translate(12 12) scale(.95) translate(-12 -12)"><path d="M8,3 H22.6 L16,21 H1.4 Z" fill="url(#bg)" stroke="#3472bf" stroke-width="0.8" stroke-linejoin="round"/></g></svg>
<svg class="ic" style="left:209px;top:240px" viewBox="0 0 24 24"><g transform="translate(12 12) scale(.95) translate(-12 -12)"><path d="M7.4,3 H16.6 L21.6,21 H2.4 Z" fill="url(#bg)" stroke="#3472bf" stroke-width="0.8" stroke-linejoin="round"/></g></svg>
<svg class="ic" style="left:243px;top:240px" viewBox="0 0 24 24"><g transform="translate(12 12) scale(.95) translate(-12 -12)"><path d="M12,2 L22,12 L12,22 L2,12 Z" fill="url(#bg)" stroke="#3472bf" stroke-width="0.8" stroke-linejoin="round"/></g></svg>
<svg class="ic" style="left:277px;top:240px" viewBox="0 0 24 24"><g transform="translate(12 12) scale(.95) translate(-12 -12)"><path d="M12,3 L21.2,9.8 L17.7,21 H6.3 L2.8,9.8 Z" fill="url(#bg)" stroke="#3472bf" stroke-width="0.8" stroke-linejoin="round"/></g></svg>
<svg class="ic" style="left:311px;top:240px" viewBox="0 0 24 24"><g transform="translate(12 12) scale(.95) translate(-12 -12)"><path d="M7,3.2 H17 L22,12 L17,20.8 H7 L2,12 Z" fill="url(#bg)" stroke="#3472bf" stroke-width="0.8" stroke-linejoin="round"/></g></svg>
<svg class="ic" style="left:345px;top:240px" viewBox="0 0 24 24"><g transform="translate(12 12) scale(.95) translate(-12 -12)"><path d="M15.75,2.95 L21.05,8.25 L21.05,15.75 L15.75,21.05 L8.25,21.05 L2.95,15.75 L2.95,8.25 L8.25,2.95 Z" fill="url(#bg)" stroke="#3472bf" stroke-width="0.8" stroke-linejoin="round"/><text x="12" y="16" font-size="11" text-anchor="middle" letter-spacing="0" font-family="Liberation Sans,sans-serif" fill="#fff">7</text></g></svg>
<svg class="ic" style="left:379px;top:240px" viewBox="0 0 24 24"><g transform="translate(12 12) scale(.95) translate(-12 -12)"><path d="M15.75,2.95 L21.05,8.25 L21.05,15.75 L15.75,21.05 L8.25,21.05 L2.95,15.75 L2.95,8.25 L8.25,2.95 Z" fill="url(#bg)" stroke="#3472bf" stroke-width="0.8" stroke-linejoin="round"/><text x="12" y="16" font-size="11" text-anchor="middle" letter-spacing="0" font-family="Liberation Sans,sans-serif" fill="#fff">8</text></g></svg>
<svg class="ic" style="left:5px;top:274px" viewBox="0 0 24 24"><g transform="translate(12 12) scale(.95) translate(-12 -12)"><path d="M15.79,2.85 L21.15,8.21 L21.15,15.79 L15.79,21.15 L8.21,21.15 L2.85,15.79 L2.85,8.21 L8.21,2.85 Z" fill="url(#bg)" stroke="#3472bf" stroke-width="0.8" stroke-linejoin="round"/><text x="11.6" y="16" font-size="11.5" text-anchor="middle" letter-spacing="-0.8" font-family="Liberation Sans,sans-serif" fill="#fff">10</text></g></svg>
<svg class="ic" style="left:39px;top:274px" viewBox="0 0 24 24"><g transform="translate(12 12) scale(.95) translate(-12 -12)"><path d="M15.79,2.85 L21.15,8.21 L21.15,15.79 L15.79,21.15 L8.21,21.15 L2.85,15.79 L2.85,8.21 L8.21,2.85 Z" fill="url(#bg)" stroke="#3472bf" stroke-width="0.8" stroke-linejoin="round"/><text x="11.6" y="16" font-size="11.5" text-anchor="middle" letter-spacing="-0.8" font-family="Liberation Sans,sans-serif" fill="#fff">12</text></g></svg>
<svg class="ic" style="left:73px;top:274px" viewBox="0 0 24 24"><g transform="translate(12 12) scale(.95) translate(-12 -12)"><path d="M12,12 H21 A9,9 0 1 1 12,3 Z" fill="url(#bg)" stroke="#3472bf" stroke-width="0.8" stroke-linejoin="round"/></g></svg>
<svg class="ic" style="left:107px;top:274px" viewBox="0 0 24 24"><g transform="translate(12 12) scale(.95) translate(-12 -12)"><path d="M8,3.9 A9,9 0 1 0 20.9,13.4 Z" fill="url(#bg)" stroke="#3472bf" stroke-width="0.8" stroke-linejoin="round"/></g></svg>
<svg class="ic" style="left:141px;top:274px" viewBox="0 0 24 24"><g transform="translate(12 12) scale(.95) translate(-12 -12)"><path d="M12,3 H21 V12 A9,9 0 1 1 12,3 Z" fill="url(#bg)" stroke="#3472bf" stroke-width="0.8" stroke-linejoin="round"/></g></svg>
<svg class="ic" style="left:175px;top:274px" viewBox="0 0 24 24"><rect x="4" y="4" width="16" height="16" fill="none" stroke="#3874be" stroke-width="2"/></svg>
<svg class="ic" style="left:209px;top:274px" viewBox="0 0 24 24"><g transform="translate(12 12) scale(.95) translate(-12 -12)"><path d="M3,3 H21 L19.4,5 H5 V19.4 L3,21 Z" fill="url(#bg)" stroke="#3472bf" stroke-width="0.8" stroke-linejoin="round"/></g></svg>
<svg class="ic" style="left:243px;top:274px" viewBox="0 0 24 24"><g transform="translate(12 12) scale(.95) translate(-12 -12)"><path d="M3,3 H8 V16 H21 V21 H3 Z" fill="url(#bg)" stroke="#3472bf" stroke-width="0.8" stroke-linejoin="round"/></g></svg>
<svg class="ic" style="left:277px;top:274px" viewBox="0 0 24 24"><g transform="translate(12 12) scale(.95) translate(-12 -12)"><path d="M3,21 V12.6 L12.6,3 H21 Z" fill="url(#bg)" stroke="#3472bf" stroke-width="0.8" stroke-linejoin="round"/></g></svg>
<svg class="ic" style="left:311px;top:274px" viewBox="0 0 24 24"><g transform="translate(12 12) scale(.95) translate(-12 -12)"><path d="M9.4,3 H14.6 V9.4 H21 V14.6 H14.6 V21 H9.4 V14.6 H3 V9.4 H9.4 Z" fill="url(#bg)" stroke="#3472bf" stroke-width="0.8" stroke-linejoin="round"/></g></svg>
<svg class="ic" style="left:345px;top:274px" viewBox="0 0 24 24"><g transform="translate(12 12) scale(.95) translate(-12 -12)"><path d="M7.4,3 H16.6 A4.4,4.4 0 0 0 21,7.4 V16.6 A4.4,4.4 0 0 0 16.6,21 H7.4 A4.4,4.4 0 0 0 3,16.6 V7.4 A4.4,4.4 0 0 0 7.4,3 Z" fill="url(#bg)" stroke="#3472bf" stroke-width="0.8" stroke-linejoin="round"/></g></svg>
<svg class="ic" style="left:379px;top:274px" viewBox="0 0 24 24"><g transform="translate(12 12) scale(.95) translate(-12 -12)"><path d="M5,5.6 V18.4 A7,2.6 0 0 0 19,18.4 V5.6 Z" fill="url(#bg)" stroke="#3472bf" stroke-width="0.8" stroke-linejoin="round"/><ellipse cx="12" cy="5.6" rx="7" ry="2.6" fill="#8fc0f4" stroke="#3472bf" stroke-width="0.8"/></g></svg>
<svg class="ic" style="left:5px;top:308px" viewBox="0 0 24 24"><g transform="translate(12 12) scale(.95) translate(-12 -12)"><path d="M3,7.6 L7.6,3 H21 V16.4 L16.4,21 H3 Z" fill="url(#bg)" stroke="#3472bf" stroke-width="0.8" stroke-linejoin="round"/><path d="M3,7.6 H16.4 V21 M16.4,7.6 L21,3" fill="none" stroke="#2f68b0" stroke-width="0.8"/><path d="M3,7.6 L7.6,3 H21 L16.4,7.6 Z" fill="#7fb4ee" stroke="#3472bf" stroke-width="0.8"/></g></svg>
<svg class="ic" style="left:39px;top:308px" viewBox="0 0 24 24"><g transform="translate(12 12) scale(.95) translate(-12 -12)"><rect x="3" y="3" width="18" height="18" fill="url(#bg)" stroke="#3472bf" stroke-width="0.8" stroke-linejoin="round"/><rect x="5.2" y="5.2" width="13.6" height="13.6" fill="none" stroke="#8fc0f4" stroke-width="0.9"/></g></svg>
<svg class="ic" style="left:73px;top:308px" viewBox="0 0 24 24"><circle cx="12" cy="12" r="7.6" fill="none" stroke="#3c7ac6" stroke-width="3"/></svg>
<svg class="ic" style="left:107px;top:308px" viewBox="0 0 24 24"><circle cx="12" cy="12" r="7.6" fill="none" stroke="#3c7ac6" stroke-width="3"/><path d="M6.6,6.6 L17.4,17.4" fill="none" stroke="#3c7ac6" stroke-width="3"/></svg>
<svg class="ic" style="left:141px;top:308px" viewBox="0 0 24 24"><path d="M4.5,15.8 A7.5,7.5 0 0 1 19.5,15.8" fill="none" stroke="#3c7ac6" stroke-width="3"/></svg>
<svg class="ic" style="left:175px;top:308px" viewBox="0 0 24 24"><g transform="translate(12 12) scale(.95) translate(-12 -12)"><path d="M3,3 H21 V14.6 L14.6,21 H3 Z" fill="url(#bg)" stroke="#3472bf" stroke-width="0.8" stroke-linejoin="round"/><path d="M21,14.6 L14.6,21 V14.6 Z" fill="#9cc6f3" stroke="#3472bf" stroke-width="0.7" stroke-linejoin="round"/></g></svg>
<svg class="ic" style="left:209px;top:308px" viewBox="0 0 24 24"><g transform="translate(12 12) scale(.95) translate(-12 -12)"><circle cx="12" cy="12" r="9" fill="url(#bg)" stroke="#3472bf" stroke-width="0.8" stroke-linejoin="round"/><circle cx="9" cy="9.4" r="1.1" fill="#2a5fa3"/><circle cx="15" cy="9.4" r="1.1" fill="#2a5fa3"/><path d="M7.6,14 C9.6,17.4 14.4,17.4 16.4,14" fill="none" stroke="#2a5fa3" stroke-width="1"/></g></svg>
<svg class="ic" style="left:243px;top:308px" viewBox="0 0 24 24"><g transform="translate(12 12) scale(.95) translate(-12 -12)"><path d="M12,21.4 C5,15.6 2,12 2,8.2 C2,5 4.4,3 7,3 C9.2,3 11,4.2 12,6.2 C13,4.2 14.8,3 17,3 C19.6,3 22,5 22,8.2 C22,12 19,15.6 12,21.4 Z" fill="url(#bg)" stroke="#3472bf" stroke-width="0.8" stroke-linejoin="round"/></g></svg>
<svg class="ic" style="left:277px;top:308px" viewBox="0 0 24 24"><g transform="translate(12 12) scale(.95) translate(-12 -12)"><path d="M8.6,3 L14,8 L12,9 L17.4,13.4 L15.4,14.4 L21.4,20.6 L11.6,15.8 L13.6,14.8 L7.6,11 L9.8,9.8 L3.6,5.2 Z" fill="url(#bg)" stroke="#3472bf" stroke-width="0.8" stroke-linejoin="round"/></g></svg>
<svg class="ic" style="left:311px;top:308px" viewBox="0 0 24 24"><circle cx="12" cy="12" r="4.6" fill="url(#bg)" stroke="#3472bf" stroke-width="0.8" stroke-linejoin="round"/><path d="M12.00,1.80 L13.60,4.40 L10.40,4.40 Z M19.21,4.79 L18.51,7.76 L16.24,5.49 Z M22.20,12.00 L19.60,13.60 L19.60,10.40 Z M19.21,19.21 L16.24,18.51 L18.51,16.24 Z M12.00,22.20 L10.40,19.60 L13.60,19.60 Z M4.79,19.21 L5.49,16.24 L7.76,18.51 Z M1.80,12.00 L4.40,10.40 L4.40,13.60 Z M4.79,4.79 L7.76,5.49 L5.49,7.76 Z " fill="#3e7ecb" stroke="none"/></svg>
<svg class="ic" style="left:345px;top:308px" viewBox="0 0 24 24"><g transform="translate(12 12) scale(.95) translate(-12 -12)"><path d="M17.6,3.4 A9.2,9.2 0 1 0 17.6,20.6 A11.4,11.4 0 0 1 17.6,3.4 Z" fill="url(#bg)" stroke="#3472bf" stroke-width="0.8" stroke-linejoin="round"/></g></svg>
<svg class="ic" style="left:379px;top:308px" viewBox="0 0 24 24"><g transform="translate(12 12) scale(.95) translate(-12 -12)"><path d="M6.6,19 C3.4,19 1.8,17 1.8,14.8 C1.8,12.8 3.2,11.4 5,11.2 C4.8,8.4 6.8,6.4 9.2,6.6 C10.2,4.4 12.4,3.6 14.4,4.2 C16.6,4.8 17.8,6.6 17.8,8.6 C20.4,8.6 22.4,10.6 22.4,13 C22.4,15 21.2,16.4 19.6,16.8 C19.4,18.4 18,19.4 16.4,19 C15,20.4 12.6,20.4 11.4,19 C10,20 8,20 6.6,19 Z" fill="url(#bg)" stroke="#3472bf" stroke-width="0.8" stroke-linejoin="round"/></g></svg>
<svg class="ic" style="left:5px;top:342px" viewBox="0 0 24 24"><path d="M3.1,4.7 A16,16 0 0 1 19.2,20.6" fill="none" stroke="#3874be" stroke-width="1.9"/></svg>
<svg class="ic" style="left:39px;top:342px" viewBox="0 0 24 24"><path d="M10,3.6 H7.4 C5.6,3.6 5,4.4 5,6 V18 C5,19.6 5.6,20.4 7.4,20.4 H10 M14.4,3.6 H17 C18.8,3.6 19.4,4.4 19.4,6 V18 C19.4,19.6 18.8,20.4 17,20.4 H14.4" fill="none" stroke="#3874be" stroke-width="1.9"/></svg>
<svg class="ic" style="left:73px;top:342px" viewBox="0 0 24 24"><path d="M11,3.4 C8,3.4 6.4,4 6.4,6.4 V9.4 C6.4,11 5.4,12 1.9,12 C5.4,12 6.4,13 6.4,14.6 V17.6 C6.4,20 8,20.6 11,20.6 M13.6,3.4 C16.6,3.4 18.2,4 18.2,6.4 V9.4 C18.2,11 19.2,12 22.7,12 C19.2,12 18.2,13 18.2,14.6 V17.6 C18.2,20 16.6,20.6 13.6,20.6" fill="none" stroke="#3874be" stroke-width="1.9"/></svg>
<svg class="ic" style="left:107px;top:342px" viewBox="0 0 24 24"><path d="M14.6,3.6 H12.6 C11.2,3.6 10.6,4.2 10.6,5.6 V18.4 C10.6,19.8 11.2,20.4 12.6,20.4 H14.6" fill="none" stroke="#3874be" stroke-width="1.9"/></svg>
<svg class="ic" style="left:141px;top:342px" viewBox="0 0 24 24"><path d="M9.4,3.6 H11.4 C12.8,3.6 13.4,4.2 13.4,5.6 V18.4 C13.4,19.8 12.8,20.4 11.4,20.4 H9.4" fill="none" stroke="#3874be" stroke-width="1.9"/></svg>
<svg class="ic" style="left:175px;top:342px" viewBox="0 0 24 24"><path d="M14.3,3.4 C11.8,3.4 11,4.4 11,6.4 V9.4 C11,11 10,12 7.6,12 C10,12 11,13 11,14.6 V17.6 C11,19.6 11.8,20.6 14.3,20.6" fill="none" stroke="#3874be" stroke-width="1.9"/></svg>
<svg class="ic" style="left:209px;top:342px" viewBox="0 0 24 24"><path d="M9.7,3.4 C12.2,3.4 13,4.4 13,6.4 V9.4 C13,11 14,12 16.4,12 C14,12 13,13 13,14.6 V17.6 C13,19.6 12.2,20.6 9.7,20.6" fill="none" stroke="#3874be" stroke-width="1.9"/></svg>
<svg class="ic" style="left:5px;top:400px" viewBox="0 0 24 24"><path d="M3,8.9 H13.9 V5.9 L21.8,12.2 L13.9,18.6 V15.4 H3 Z" fill="url(#bg)" stroke="#3472bf" stroke-width="0.8" stroke-linejoin="round"/></svg>
<svg class="ic" style="left:39px;top:400px" viewBox="0 0 24 24"><path d="M21.2,8.9 H10.3 V5.9 L2.4,12.2 L10.3,18.6 V15.4 H21.2 Z" fill="url(#bg)" stroke="#3472bf" stroke-width="0.8" stroke-linejoin="round"/></svg>
<svg class="ic" style="left:73px;top:400px" viewBox="0 0 24 24"><path d="M8.9,20.8 V10.9 H5.3 L12.2,2.3 L19.2,10.9 H15.6 V20.8 Z" fill="url(#bg)" stroke="#3472bf" stroke-width="0.8" stroke-linejoin="round"/></svg>
<svg class="ic" style="left:107px;top:400px" viewBox="0 0 24 24"><path d="M8.9,3.2 V13.1 H5.3 L12.2,21.7 L19.2,13.1 H15.6 V3.2 Z" fill="url(#bg)" stroke="#3472bf" stroke-width="0.8" stroke-linejoin="round"/></svg>
<svg class="ic" style="left:141px;top:400px" viewBox="0 0 24 24"><path d="M2.3,12.2 L8.3,6.9 V9.5 H15.6 V6.9 L21.6,12.2 L15.6,17.4 V14.8 H8.3 V17.4 Z" fill="url(#bg)" stroke="#3472bf" stroke-width="0.8" stroke-linejoin="round"/></svg>
<svg class="ic" style="left:175px;top:400px" viewBox="0 0 24 24"><path d="M12.2,2.3 L17.4,8.3 H14.8 V15.6 H17.4 L12.2,21.6 L6.9,15.6 H9.5 V8.3 H6.9 Z" fill="url(#bg)" stroke="#3472bf" stroke-width="0.8" stroke-linejoin="round"/></svg>
<svg class="ic" style="left:209px;top:400px" viewBox="0 0 24 24"><path d="M11.8,2.1 L15.4,6.2 H12.8 V10.8 H17.4 V8.2 L21.4,11.8 L17.4,15.4 V12.8 H12.8 V17.4 H15.4 L11.8,21.4 L8.2,17.4 H10.8 V12.8 H6.2 V15.4 L2.1,11.8 L6.2,8.2 V10.8 H10.8 V6.2 H8.2 Z" fill="url(#bg)" stroke="#3472bf" stroke-width="0.8" stroke-linejoin="round"/></svg>
<svg class="ic" style="left:243px;top:400px" viewBox="0 0 24 24"><path d="M12,4.1 L15.6,8.2 H13 V13.7 H17.6 V11.1 L21.6,14.7 L17.6,18.4 V15.7 H6.4 V18.4 L2.3,14.7 L6.4,11.1 V13.7 H11 V8.2 H8.4 Z" fill="url(#bg)" stroke="#3472bf" stroke-width="0.8" stroke-linejoin="round"/></svg>
<svg class="ic" style="left:277px;top:400px" viewBox="0 0 24 24"><path d="M5.8,18.8 V11.4 C5.8,9 7,8 9.4,8 H15.6" fill="none" stroke="#3874be" stroke-width="2"/><path d="M19.9,8 L15.2,4.1 V11.9 Z" fill="#3874be" stroke="none"/></svg>
<svg class="ic" style="left:311px;top:400px" viewBox="0 0 24 24"><path d="M5.8,18.8 V12 C5.8,8.2 8,6.2 11,6.2 C14,6.2 16.4,8.2 16.4,12 V12.6" fill="none" stroke="#3874be" stroke-width="2"/><path d="M16.4,17.4 L12.4,12.2 H20.4 Z" fill="#3874be" stroke="none"/></svg>
<svg class="ic" style="left:345px;top:400px" viewBox="0 0 24 24"><path d="M8.6,16 H16.5 V8.6" fill="none" stroke="#3874be" stroke-width="2"/><path d="M16.5,4.1 L12.6,9 H20.5 Z" fill="#3874be" stroke="none"/><path d="M4.3,16 L9,12 V20 Z" fill="#3874be" stroke="none"/></svg>
<svg class="ic" style="left:379px;top:400px" viewBox="0 0 24 24"><path d="M4.8,17.8 H16 V8.6" fill="none" stroke="#3874be" stroke-width="2"/><path d="M16,4.1 L12,9 H20 Z" fill="#3874be" stroke="none"/></svg>
<svg class="ic" style="left:5px;top:434px" viewBox="0 0 24 24"><path d="M13.6,7 H10 C7,7 5.8,8.8 5.8,10.9 C5.8,13.1 7.2,15 10,15 H15.6" fill="none" stroke="#3c7ac6" stroke-width="2.2"/><path d="M19.8,15 L15.2,11.4 V18.6 Z" fill="#3874be" stroke="none"/></svg>
<svg class="ic" style="left:39px;top:434px" viewBox="0 0 24 24"><path d="M10.4,7 H14 C17,7 18.2,8.8 18.2,10.9 C18.2,13.1 16.8,15 14,15 H8.4" fill="none" stroke="#3c7ac6" stroke-width="2.2"/><path d="M4.2,15 L8.8,11.4 V18.6 Z" fill="#3874be" stroke="none"/></svg>
<svg class="ic" style="left:73px;top:434px" viewBox="0 0 24 24"><path d="M6,9.6 V14.4 C6,17.4 8,18.8 10.7,18.8 C13.4,18.8 15.4,17.4 15.4,14.4 V9" fill="none" stroke="#3c7ac6" stroke-width="2.2"/><path d="M15.4,4.4 L11.6,9.4 H19.2 Z" fill="#3874be" stroke="none"/></svg>
<svg class="ic" style="left:107px;top:434px" viewBox="0 0 24 24"><path d="M6,14.4 V10 C6,7 8,5.6 10.7,5.6 C13.4,5.6 15.4,7 15.4,10 V15" fill="none" stroke="#3c7ac6" stroke-width="2.2"/><path d="M15.4,19.6 L11.6,14.6 H19.2 Z" fill="#3874be" stroke="none"/></svg>
<svg class="ic" style="left:141px;top:434px" viewBox="0 0 24 24"><path d="M6.8,8.8 H13.8 V5.6 L21.6,12 L13.8,18.5 V15.4 H6.8 Z" fill="url(#bg)" stroke="#3472bf" stroke-width="0.8" stroke-linejoin="round"/><path d="M3.2,8.8 V15.4 M5.2,8.8 V15.4" fill="none" stroke="#3874be" stroke-width="1"/></svg>
<svg class="ic" style="left:175px;top:434px" viewBox="0 0 24 24"><path d="M3.4,8.8 H13.8 V5.6 L21.9,12 L13.8,18.5 V15.4 H3.4 L6.4,12 Z" fill="url(#bg)" stroke="#3472bf" stroke-width="0.8" stroke-linejoin="round"/></svg>
<svg class="ic" style="left:209px;top:434px" viewBox="0 0 24 24"><path d="M3.8,7.1 H15.4 L20.4,12 L15.4,16.9 H3.8 Z" fill="url(#bg)" stroke="#3472bf" stroke-width="0.8" stroke-linejoin="round"/></svg>
<svg class="ic" style="left:243px;top:434px" viewBox="0 0 24 24"><path d="M5.1,7.1 H13.6 L18.9,12 L13.6,16.9 H5.1 L10.4,12 Z" fill="url(#bg)" stroke="#3472bf" stroke-width="0.8" stroke-linejoin="round"/></svg>
<svg class="ic" style="left:277px;top:434px" viewBox="0 0 24 24"><path d="M3.8,6.3 H11.8 V11 H16.4 V8.6 L20.5,12.1 L16.4,15.6 V13.2 H11.8 V17.9 H3.8 Z" fill="url(#bg)" stroke="#3472bf" stroke-width="0.8" stroke-linejoin="round"/></svg>
<svg class="ic" style="left:311px;top:434px" viewBox="0 0 24 24"><path d="M6.2,4.3 H18 V12.3 H13.2 V16.4 H15.6 L12.1,20.5 L8.6,16.4 H11 V12.3 H6.2 Z" fill="url(#bg)" stroke="#3472bf" stroke-width="0.8" stroke-linejoin="round"/></svg>
<svg class="ic" style="left:345px;top:434px" viewBox="0 0 24 24"><path d="M20.1,6.3 H12.1 V11 H7.5 V8.6 L3.3,12.1 L7.5,15.6 V13.2 H12.1 V17.9 H20.1 Z" fill="url(#bg)" stroke="#3472bf" stroke-width="0.8" stroke-linejoin="round"/></svg>
<svg class="ic" style="left:379px;top:434px" viewBox="0 0 24 24"><path d="M5.8,19.9 H18 V11.9 H13.2 V7.8 H15.6 L12,3.7 L8.5,7.8 H10.8 V11.9 H5.8 Z" fill="url(#bg)" stroke="#3472bf" stroke-width="0.8" stroke-linejoin="round"/></svg>
<svg class="ic" style="left:5px;top:468px" viewBox="0 0 24 24"><path d="M9.5,6.5 H15 V10.8 H17 V8.5 L21.7,12 L17,15.5 V13.2 H15 V17.4 H9.5 V13.2 H7.4 V15.5 L2.7,12 L7.4,8.5 V10.8 H9.5 Z" fill="url(#bg)" stroke="#3472bf" stroke-width="0.8" stroke-linejoin="round"/></svg>
<svg class="ic" style="left:39px;top:468px" viewBox="0 0 24 24"><path d="M12.1,2.3 L15.6,6 H13.3 V8.4 H15.8 V10.8 H17.8 V8.4 L21.5,11.9 L17.8,15.4 V13 H15.8 V15.4 H13.3 V17.6 H15.6 L12.1,21.3 L8.6,17.6 H10.9 V15.4 H8.4 V13 H6.4 V15.4 L2.7,11.9 L6.4,8.4 V10.8 H8.4 V8.4 H10.9 V6 H8.6 Z" fill="url(#bg)" stroke="#3472bf" stroke-width="0.8" stroke-linejoin="round"/></svg>
<svg class="ic" style="left:73px;top:468px" viewBox="0 0 24 24"><path d="M6,16.4 V12 C6,8.4 8.4,6.4 11.3,6.4 C14.2,6.4 16.8,8.4 16.8,12 V13.4" fill="none" stroke="#3874be" stroke-width="2"/><path d="M16.8,18.4 L12.8,13.2 H20.8 Z" fill="#3874be" stroke="none"/></svg>
<div id="sbar" class="abs"></div><div id="sthumb" class="abs"></div>
</div></div>
<svg class="abs" style="left:0;top:0;pointer-events:none" width="1009" height="775" viewBox="0 0 1009 775"><defs><filter id="ash" x="-5%" y="-5%" width="110%" height="110%"><feDropShadow dx="0" dy="1.4" stdDeviation="1.1" flood-color="#000" flood-opacity="0.5"/></filter></defs><g filter="url(#ash)" fill="#f4594e"><path d="M73.4,61.4 L91.8,84.8 L82.8,86.4 Q89.6,126 92.5,159.2 A5.7,5.7 0 0 1 81.1,160.4 Q77.6,122 71.6,88 L60.8,92.4 Z"/><path d="M394.6,90.6 L384.6,122.4 L381.6,110.8 L317,167.2 A5,5 0 0 1 310.2,159.7 L372.8,102.6 L362.6,97.8 Z"/><path d="M557.6,152.8 L536.2,178.6 L538.2,167 L501.4,178.4 A5,5 0 0 1 498,168.6 L533,156.6 L525.8,146.8 Z"/></g></svg>
</body></html>
